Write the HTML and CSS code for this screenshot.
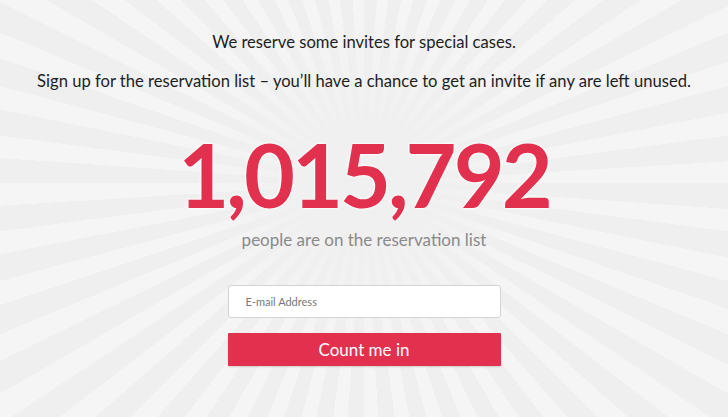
FILE: index.html
```html
<!DOCTYPE html>
<html lang="en">
<head>
  <meta charset="UTF-8" />
  <meta name="viewport" content="width=device-width, initial-scale=1.0"/>
  <title>Reservation List</title>
  <link rel="stylesheet" href="styles.css">
</head>
<body>

<div class="page">
  <p class="intro">We reserve some invites for special cases.</p>
  <p class="intro">Sign up for the reservation list – you’ll have a chance to get an invite if any are left unused.</p>

  <div class="count">1,015,792</div>
  <p class="count-label">people are on the reservation list</p>

  <form class="signup">
    <input type="email" placeholder="E-mail Address" />
    <button type="submit">Count me in</button>
  </form>
</div>

</body>
</html>
```

FILE: styles.css
```css
html, body {
  height: 100%;
}
body {
  margin: 0;
  font-family: Lato, "Open Sans", sans-serif;
  background-color: #efefef;
  background-image:
    radial-gradient(circle at 50% 44%, #f0f0f0 0, #f0f0f0 50px, rgba(240,240,240,0) 170px),
    repeating-conic-gradient(from 0deg at 50% 44%, #efefef 0deg 4deg, #f5f5f5 4deg 7.5deg);
  overflow: hidden;
}
.page {
  display: flex;
  flex-direction: column;
  align-items: center;
  padding-top: 31px;
}
.intro {
  margin: 0 0 17px;
  font-size: 16.6px;
  line-height: 22px;
  color: #1e1e1e;
}
.count {
  margin-top: 15px;
  font-size: 88px;
  font-weight: 700;
  line-height: 100px;
  color: #e2304f;
  letter-spacing: -3px;
  text-shadow: 0 0 3px #fff, 0 0 3px #fff;
}
.count-label {
  margin: 5px 0 0;
  font-size: 17px;
  line-height: 22px;
  color: #8a8a8a;
}
.signup {
  margin-top: 34px;
  width: 273px;
  display: flex;
  flex-direction: column;
  gap: 15px;
}
.signup input {
  box-sizing: border-box;
  height: 33px;
  padding: 0 17px;
  border: 1px solid #d3d3d3;
  border-radius: 3px;
  background: #fff;
  font-family: inherit;
  font-size: 11px;
}
.signup input::placeholder {
  color: #777;
}
.signup button {
  height: 33px;
  border: none;
  border-radius: 1px;
  background: #e3304f;
  color: #fff;
  font-family: inherit;
  font-size: 17px;
  box-shadow: 0 1px 2px rgba(0,0,0,0.15);
}
```
